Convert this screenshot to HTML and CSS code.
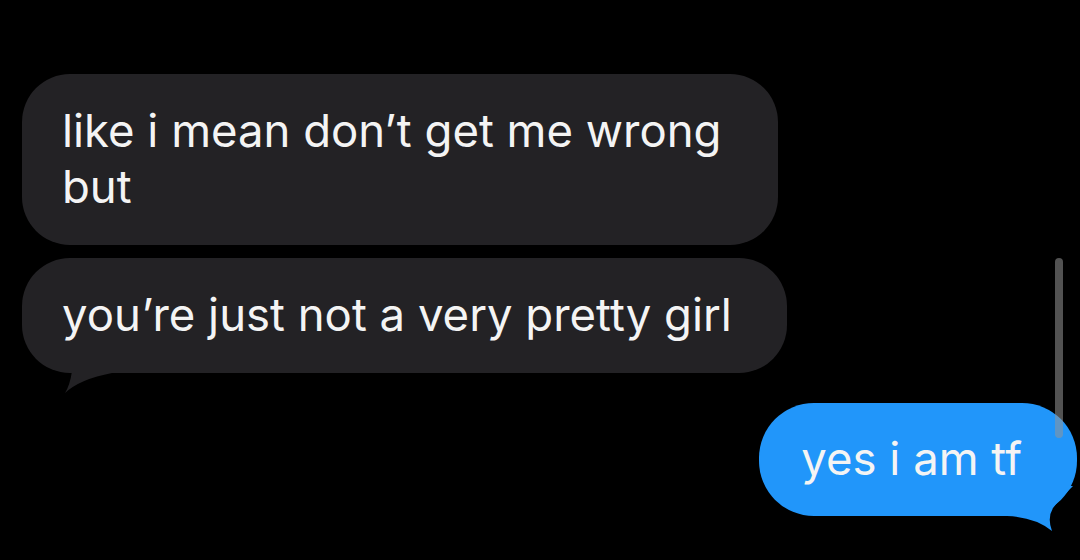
FILE: index.html
```html
<!DOCTYPE html>
<html>
<head>
    <title>Messages</title>
    <link rel="stylesheet" href="styles.css">
</head>
<body>
    <div class="thread">
        <div class="bubble received first">
            like i mean don’t get me wrong but
        </div>
        <div class="bubble received">
            you’re just not a very pretty girl
            <svg class="tail tail-left" width="90" height="50" viewBox="0 0 90 50">
                <path d="M50 0 L50 28 Q48 42 43 50 Q58 36 90 30 L90 0 Z" fill="#232225"/>
            </svg>
        </div>
        <div class="bubble sent">
            yes i am tf
            <svg class="tail tail-right" width="90" height="45" viewBox="0 0 90 45">
                <path d="M20 0 L20 30 Q48 31 65 45 Q60 32 66 22 Q72 14 86 0 Z" fill="#2196fa"/>
            </svg>
        </div>
    </div>
    <div class="scroll-thumb"></div>
</body>
</html>
```

FILE: styles.css
```css
body {
    margin: 0;
    padding: 0;
    background-color: #000;
    font-family: Inter, "Noto Sans", Arial, sans-serif;
    height: 560px;
    overflow: hidden;
}

.thread {
    display: flex;
    flex-direction: column;
    padding-top: 74px;
}

.bubble {
    position: relative;
    box-sizing: border-box;
    padding: 29px 55px 30px 40px;
    border-radius: 48px;
    font-size: 45.5px;
    line-height: 56px;
    color: #f4f4f4;
}

.bubble.received {
    align-self: flex-start;
    margin-left: 22px;
    background-color: #232225;
}

.bubble.first {
    width: 756px;
    padding-right: 40px;
    margin-bottom: 13px;
}

.bubble.sent {
    align-self: flex-end;
    margin-right: 3px;
    margin-top: 30px;
    padding: 28px 55px 29px 42px;
    border-radius: 55px;
    background-color: #2196fa;
}

.tail {
    position: absolute;
}

.tail-left {
    left: 0;
    bottom: -20px;
}

.tail-right {
    right: 0;
    bottom: -15px;
}

.scroll-thumb {
    position: absolute;
    top: 258px;
    right: 17px;
    width: 8px;
    height: 180px;
    border-radius: 4px;
    background-color: rgba(150, 150, 150, 0.55);
}
```
